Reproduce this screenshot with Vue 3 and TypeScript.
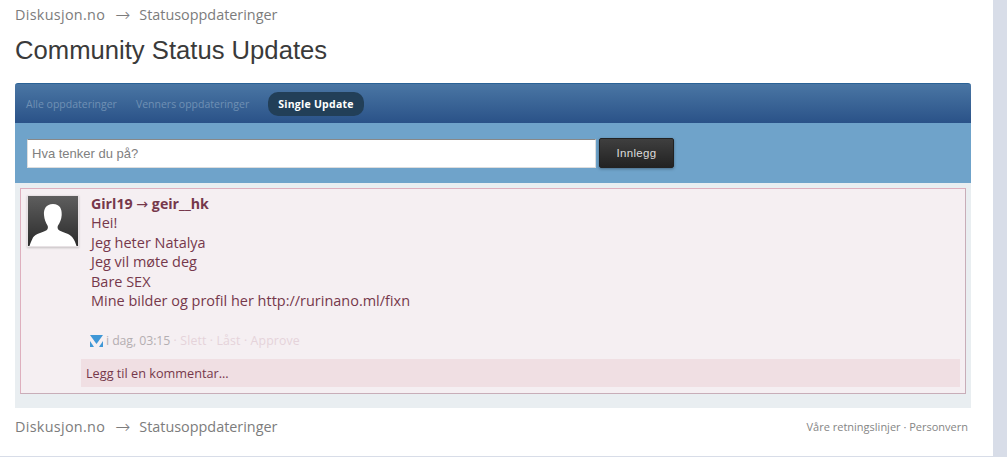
<script setup lang="ts">
const lines: string[] = ['Hei!', 'Jeg heter Natalya', 'Jeg vil møte deg', 'Bare SEX', 'Mine bilder og profil her http://rurinano.ml/fixn']
</script>

<template>
  <div class="page">
    <div class="content">
      <nav class="crumbs top"><span class="site">Diskusjon.no</span><span class="arrow">→</span><span>Statusoppdateringer</span></nav>
      <h1 class="title">Community Status Updates</h1>
      <div class="tabs">
        <span class="tab">Alle oppdateringer</span>
        <span class="tab">Venners oppdateringer</span>
        <span class="tab active">Single Update</span>
      </div>
      <form class="composer" @submit.prevent>
        <input class="status-input" type="text" placeholder="Hva tenker du på?" />
        <button class="post-btn" type="submit">Innlegg</button>
      </form>
      <div class="list">
        <article class="card">
          <div class="main">
            <div class="avatar">
              <svg width="50" height="50" viewBox="0 0 50 50">
                <defs>
                  <linearGradient id="avbg" x1="0" y1="0" x2="0" y2="1">
                    <stop offset="0" stop-color="#5e5e5e" />
                    <stop offset="1" stop-color="#2b2b2b" />
                  </linearGradient>
                </defs>
                <rect width="50" height="50" fill="url(#avbg)" />
                <path d="M25 8C18 8 15.500 13 16 19C16.300 23.500 18 27 19.500 29.500C20.300 31 20 33 18.500 34.200C15 36.500 7.500 37.500 5 41.500C3.500 44.500 2.500 47 1.500 50L48.500 50C47.500 47 46.500 44 44.500 41.500C42 37.500 34.500 36.500 31 34.200C29.500 33 29.200 31 30 29.500C31.700 27 33.500 23.500 33.700 19C34 13 32 8 25 8Z" fill="#fff" />
              </svg>
            </div>
            <div class="body">
              <div class="who">Girl19 <span class="to">→</span> geir__hk</div>
              <div v-for="line in lines" :key="line" class="line">{{ line }}</div>
              <div class="meta">
                <svg class="mark" width="13" height="12" viewBox="0 0 13 12">
                  <path d="M0 0H13L6.500 9Z" fill="#3f97d6" />
                  <path d="M0 6L4 12H0Z" fill="#3f97d6" />
                  <path d="M13 6L9 12H13Z" fill="#3f97d6" />
                </svg>
                <span class="date">i dag, 03:15</span>
                <span class="faint"> · Slett · Låst · Approve</span>
              </div>
            </div>
          </div>
          <div class="comment">Legg til en kommentar...</div>
        </article>
      </div>
      <footer class="foot">
        <nav class="crumbs"><span class="site">Diskusjon.no</span><span class="arrow">→</span><span>Statusoppdateringer</span></nav>
        <div class="links">Våre retningslinjer · Personvern</div>
      </footer>
    </div>
  </div>
</template>

<style>
html, body { margin: 0; background: #d8dde8; }
</style>

<style scoped>
.page {
  width: 993px;
  height: 456px;
  background: #fff;
  overflow: hidden;
  font-family: "Open Sans", sans-serif;
  box-sizing: border-box;
}
.content { width: 956px; margin-left: 15px; }
.crumbs {
  display: flex;
  align-items: center;
  font-size: 14.400px;
  line-height: 20px;
  color: #7c7c7c;
  height: 20px;
}
.crumbs.top { padding-top: 5px; }
.site { letter-spacing: 0.3px; }
.arrow { margin: 0 9px 0 10px; font-size: 18px; font-family: "DejaVu Sans", sans-serif; font-weight: 200; }
.title {
  margin: 9px 0 0;
  font: 400 25.650px/32px "Liberation Sans", sans-serif;
  color: #3a3a3a;
  height: 33px;
}
.tabs {
  margin-top: 16px;
  height: 40px;
  box-sizing: border-box;
  border-radius: 3px 3px 0 0;
  border-top: 1px solid #2a6296;
  background: linear-gradient(#4a76a4, #2a5288);
  display: flex;
  align-items: center;
  padding: 0 11px;
  gap: 19px;
  font-size: 10.500px;
}
.tab { color: #6f90b4; white-space: nowrap; }
.tab.active {
  color: #fff;
  font-weight: 700;
  letter-spacing: 0.25px;
  background: #223f58;
  border-radius: 10px;
  height: 24px;
  line-height: 24px;
  padding: 0 10px;
}
.composer {
  height: 60px;
  box-sizing: border-box;
  background: #6fa3ca;
  padding: 15px 0 0 12px;
  display: flex;
  align-items: flex-start;
  gap: 3px;
}
.status-input {
  width: 569px;
  height: 29px;
  margin: 1px 0 0;
  box-sizing: border-box;
  border: 1px solid #ddd;
  border-top-color: #888;
  background: #fff;
  padding: 0 4px;
  font: 13px "Liberation Sans", sans-serif;
  outline: none;
}
.status-input::placeholder { color: #808080; opacity: 1; }
.post-btn {
  width: 75px;
  height: 30px;
  border: 1px solid #222;
  border-radius: 2px;
  background: linear-gradient(#3f3f3f, #222);
  box-shadow: 0 1px 3px rgba(0, 0, 0, 0.35);
  color: #dcdcdc;
  font: 11.500px "Liberation Sans", sans-serif;
  letter-spacing: 0.35px;
  padding: 0;
}
.list {
  background: #e9eef1;
  padding: 5px 5px 14px;
  height: 225px;
  box-sizing: border-box;
}
.card {
  height: 206px;
  box-sizing: border-box;
  background: #f5eff2;
  border: 1px solid #deafbe;
  border-right-color: #c8adb8;
  border-bottom-color: #c8adb8;
  padding: 6px 5px 6px 6px;
  display: flex;
  flex-direction: column;
}
.main { display: flex; flex: 1; }
.avatar {
  width: 50px;
  height: 50px;
  border: 1px solid #e8e2e5;
  background: #fff;
  box-shadow: 0 1px 2px rgba(0, 0, 0, 0.2);
  flex: none;
}
.avatar svg { display: block; }
.body {
  margin-left: 12px;
  margin-top: -1px;
  color: #76384b;
  font-size: 14.480px;
  line-height: 19.600px;
}
.who { font-weight: 700; font-size: 14.200px; height: 19px; }
.to { font-family: "DejaVu Sans", sans-serif; font-weight: 400; }
.meta {
  display: flex;
  align-items: center;
  margin-top: 20px;
  margin-left: -1px;
  font-size: 12.300px;
  height: 20px;
  white-space: pre;
}
.mark { margin-right: 3px; margin-top: 1px; }
.date { color: #b4aeb1; letter-spacing: -0.07px; }
.faint { color: #e5d3da; letter-spacing: 0.14px; }
.comment {
  background: #f0dfe3;
  height: 28px;
  line-height: 28px;
  margin-left: 54px;
  padding-left: 5px;
  font-size: 12.700px;
  color: #76384b;
}
.foot {
  display: flex;
  justify-content: space-between;
  align-items: center;
  height: 37px;
}
.links { font-size: 11px; color: #858585; padding-right: 3px; }
</style>
